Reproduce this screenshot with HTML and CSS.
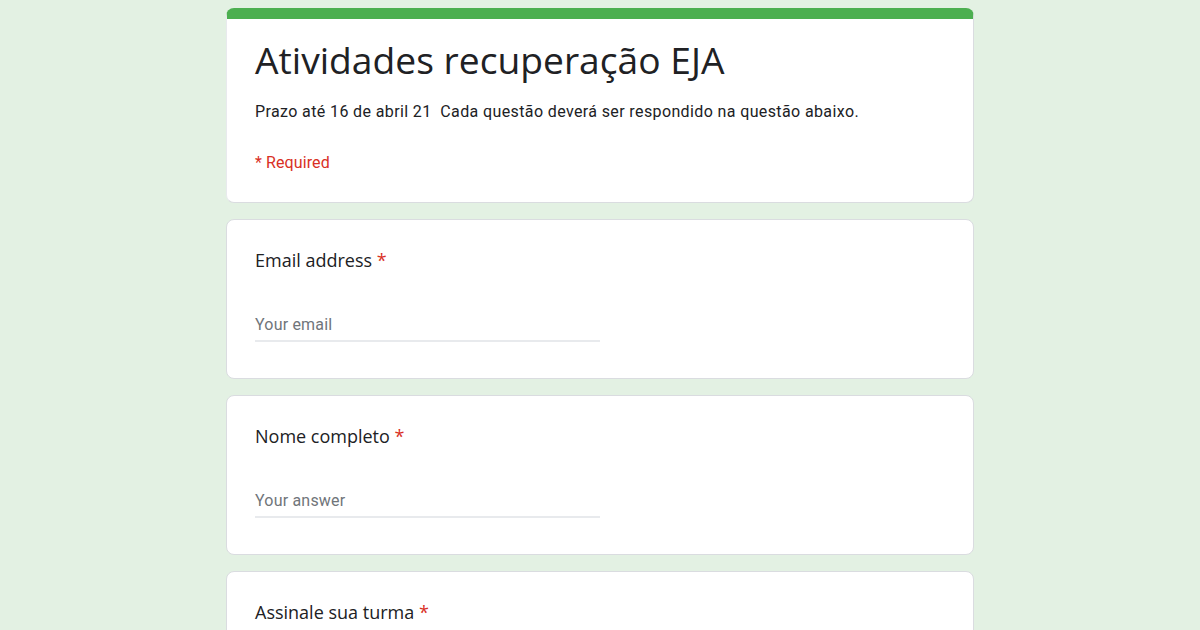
FILE: index.html
```html
<!DOCTYPE html>
<html lang="pt">
<head>
<meta charset="utf-8">
<title>Atividades recuperação EJA</title>
<link rel="stylesheet" href="styles.css">
</head>
<body>
<main class="form">
  <section class="card header">
    <h1 class="title">Atividades recuperação EJA</h1>
    <p class="desc">Prazo até 16 de abril 21&nbsp; Cada questão deverá ser respondido na questão abaixo.</p>
    <p class="required">* Required</p>
  </section>
  <section class="card question">
    <div class="q-title">Email address <span class="star">*</span></div>
    <div class="input">Your email</div>
  </section>
  <section class="card question">
    <div class="q-title">Nome completo <span class="star">*</span></div>
    <div class="input">Your answer</div>
  </section>
  <section class="card question">
    <div class="q-title">Assinale sua turma <span class="star">*</span></div>
    <div class="input">&nbsp;</div>
  </section>
</main>
</body>
</html>
```

FILE: styles.css
```css
html, body {
  margin: 0;
  padding: 0;
  background: #e3f1e3;
}
body {
  font-family: Roboto, "Liberation Sans", sans-serif;
  color: #202124;
  overflow: hidden;
  height: 630px;
}
.form {
  width: 748px;
  margin: 8px auto 0;
  display: flex;
  flex-direction: column;
  gap: 16px;
}
.card {
  background: #fff;
  border: 1px solid #dadce0;
  border-radius: 8px;
  box-sizing: border-box;
}
.header {
  border-top: 11px solid #4caf50;
  border-left-color: #e8eaed;
  padding: 17px 28px 29px;
}
.title {
  margin: 0;
  font-family: "Open Sans", sans-serif;
  font-weight: 400;
  font-size: 37.2px;
  line-height: 48px;
  color: #202124;
}
.desc {
  margin: 18px 0 0;
  font-size: 16px;
  line-height: 20px;
  letter-spacing: 0.38px;
  color: #202124;
}
.required {
  margin: 31px 0 0;
  font-size: 16px;
  line-height: 20px;
  letter-spacing: 0.1px;
  color: #d93025;
}
.question {
  padding: 28px 28px 36px;
}
.q-title {
  font-family: "Open Sans", sans-serif;
  font-size: 18px;
  line-height: 24px;
  color: #202124;
}
.star {
  color: #d93025;
}
.input {
  margin-top: 43px;
  width: 345px;
  font-size: 16px;
  line-height: 20px;
  letter-spacing: 0.2px;
  color: #70757a;
  padding-bottom: 5px;
  border-bottom: 2px solid #e8eaed;
}
```
